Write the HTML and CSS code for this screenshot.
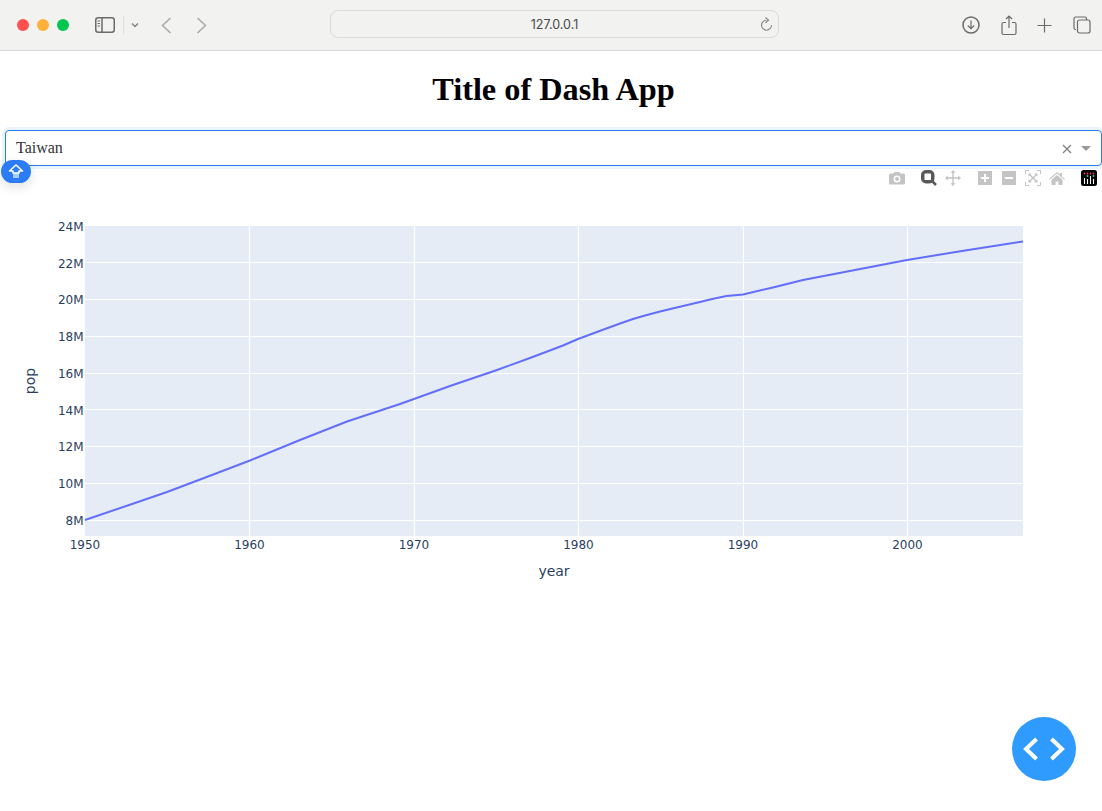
FILE: index.html
```html
<!DOCTYPE html>
<html>
<head>
  <meta charset="utf-8">
  <title>Title of Dash App</title>
  <link rel="stylesheet" href="styles.css">
</head>
<body>
  <!-- Browser toolbar -->
  <div class="toolbar">
    <div class="toolbar-left">
      <span class="light light-red"></span>
      <span class="light light-yellow"></span>
      <span class="light light-green"></span>
      <svg class="tb-sidebar" width="20" height="16" viewBox="0 0 20 16">
        <rect x="0.75" y="0.75" width="18.5" height="14.5" rx="2.5" class="tb-stroke"/>
        <path d="M7 1v14" class="tb-stroke"/>
        <path d="M2.5 4h2.5M2.5 6.5h2.5M2.5 9h2.5" class="tb-stroke-thin"/>
      </svg>
      <span class="tb-divider"></span>
      <svg class="tb-chevron" width="8" height="6" viewBox="0 0 8 6">
        <path d="M1 1.5l3 3 3-3" class="tb-stroke-soft"/>
      </svg>
      <svg class="tb-back" width="11" height="17" viewBox="0 0 11 17">
        <path d="M9.5 1L1.5 8.5l8 7.5" class="tb-stroke-nav"/>
      </svg>
      <svg class="tb-forward" width="11" height="17" viewBox="0 0 11 17">
        <path d="M1.5 1l8 7.5-8 7.5" class="tb-stroke-nav"/>
      </svg>
    </div>
    <div class="urlbar">
      <span class="url-text">127.0.0.1</span>
      <svg class="url-reload" width="13" height="15" viewBox="0 0 13 15">
        <path d="M6.5 3.2a5 5 0 1 0 5 5" class="tb-stroke-reload"/>
        <path d="M5.5 0.5l3 2.7-3 2.7" class="tb-stroke-reload"/>
      </svg>
    </div>
    <div class="toolbar-right">
      <svg width="18" height="18" viewBox="0 0 18 18">
        <circle cx="9" cy="9" r="8" class="tb-stroke"/>
        <path d="M9 4.5v8M5.8 9.5L9 12.7l3.2-3.2" class="tb-stroke-thin"/>
      </svg>
      <svg width="16" height="21" viewBox="0 0 16 21">
        <path d="M5 7.5H2.5a1.5 1.5 0 0 0-1.5 1.5v9a1.5 1.5 0 0 0 1.5 1.5h11a1.5 1.5 0 0 0 1.5-1.5V9a1.5 1.5 0 0 0-1.5-1.5H11" class="tb-stroke-thin"/>
        <path d="M8 13V1.5M5 4l3-3 3 3" class="tb-stroke-thin"/>
      </svg>
      <svg width="15" height="15" viewBox="0 0 15 15">
        <path d="M7.5 0.5v14M0.5 7.5h14" class="tb-stroke-thin"/>
      </svg>
      <svg width="18" height="18" viewBox="0 0 18 18">
        <path d="M3 13.5H2.5A1.5 1.5 0 0 1 1 12V2.5A1.5 1.5 0 0 1 2.5 1H12a1.5 1.5 0 0 1 1.5 1.5V4" class="tb-stroke-thin"/>
        <rect x="4.5" y="4" width="12.5" height="13" rx="2" class="tb-stroke-thin"/>
      </svg>
    </div>
  </div>

  <!-- Page header and country picker -->
  <h1 class="title">Title of Dash App</h1>
  <div class="dropdown">
    <span class="dropdown-value">Taiwan</span>
    <svg class="dropdown-clear" width="10" height="10" viewBox="0 0 10 10">
      <path d="M1 1l8 8M9 1l-8 8"/>
    </svg>
    <span class="dropdown-arrow"></span>
  </div>

  <!-- Graph -->
  <div class="graph">
    <div class="modebar">
      <div class="modebar-group">
        <svg class="mode-icon" viewBox="0 0 16 16">
          <path class="mode-fill" fill-rule="evenodd" d="M1.5 3.5h3l1-1.5h5l1 1.5h3a1.5 1.5 0 0 1 1.5 1.5v8a1.5 1.5 0 0 1-1.5 1.5h-13A1.5 1.5 0 0 1 0 13V5a1.5 1.5 0 0 1 1.5-1.5zM8 5.5a3.5 3.5 0 1 0 0 7 3.5 3.5 0 0 0 0-7zM8 7a2 2 0 1 1 0 4 2 2 0 0 1 0-4z"/>
        </svg>
      </div>
      <div class="modebar-group">
        <svg class="mode-icon" viewBox="0 0 16 16">
          <path class="mode-active" fill-rule="evenodd" d="M5 0h3.500A5 5 0 0 1 13.500 5v3.500a5 5 0 0 1-5 5H5a5 5 0 0 1-5-5V5a5 5 0 0 1 5-5zM4 3.500A.5.5 0 0 0 3.500 4v5.500a.5.5 0 0 0 .5.5h5.500a.5.5 0 0 0 .5-.5V4a.5.5 0 0 0-.5-.5z"/>
          <path class="mode-handle" d="M11.500 11.500L15 15"/>
        </svg>
        <svg class="mode-icon" viewBox="0 0 16 16">
          <path class="mode-fill" d="M8 0l2.500 2.800H8.700v4.500h4.500V5.500L16 8l-2.800 2.500V8.700H8.700v4.500h1.800L8 16l-2.500-2.800h1.800V8.700H2.800v1.800L0 8l2.800-2.500v1.800h4.500V2.800H5.500z"/>
        </svg>
      </div>
      <div class="modebar-group">
        <svg class="mode-icon" viewBox="0 0 16 16">
          <path class="mode-fill" fill-rule="evenodd" d="M1 1h14v14H1zM7 4v3H4v2h3v3h2V9h3V7H9V4z"/>
        </svg>
        <svg class="mode-icon" viewBox="0 0 16 16">
          <path class="mode-fill" fill-rule="evenodd" d="M1 1h14v14H1zM4 7v2h8V7z"/>
        </svg>
        <svg class="mode-icon" viewBox="0 0 16 16">
          <path class="mode-line" d="M.5 4V.5H4M12 .5h3.500V4M15.500 12v3.500H12M4 15.500H.5V12"/>
          <path class="mode-fill" d="M3.500 3.500h3.200L5.600 4.600 8 7l2.400-2.400-1.100-1.100h3.200v3.200l-1.100-1.100L9 8l2.400 2.400 1.100-1.100v3.200H9.300l1.100-1.100L8 9l-2.400 2.400 1.100 1.100H3.500V9.300l1.100 1.100L7 8 4.600 5.600 3.500 6.700z"/>
        </svg>
        <svg class="mode-icon" viewBox="0 0 16 16">
          <path class="mode-fill" d="M8 2l3 2.600V3h2v3.400L16 9l-.7.800L8 3.600.7 9.800 0 9zM2.500 9.800L8 5l5.500 4.800V15H9.500v-3.500h-3V15h-4z"/>
        </svg>
      </div>
      <div class="modebar-group">
        <svg class="mode-icon" viewBox="0 0 16 16">
          <rect width="16" height="16" rx="2.500" class="logo-bg"/>
          <circle cx="3.500" cy="3.500" r=".9" class="logo-pink"/>
          <circle cx="6.500" cy="3.500" r=".9" class="logo-pink"/>
          <circle cx="9.500" cy="3.500" r=".9" class="logo-pink"/>
          <circle cx="12.500" cy="3.500" r=".9" class="logo-pink"/>
          <circle cx="6.500" cy="6" r=".9" class="logo-teal"/>
          <circle cx="12.500" cy="6" r=".9" class="logo-teal"/>
          <path d="M3.500 8v6M6.500 9v5M9.500 6v8M12.500 9v5" class="logo-bars"/>
        </svg>
      </div>
    </div>

    <svg class="chart" width="1102" height="450" viewBox="0 166 1102 450">
      <rect class="plot-bg" x="85" y="226" width="938" height="310"/>

      <path class="grid" d="M249.500 226v310M414.500 226v310M578.500 226v310M743.500 226v310M907.500 226v310"/>
      <path class="grid" d="M85 262.500h938M85 299.500h938M85 336.500h938M85 373.500h938M85 409.500h938M85 446.500h938M85 483.500h938M85 520.500h938"/>

      <polyline class="trace" points="85,520 135,503 167,492 208,476.500 250,460.500 300,440 347,421.500 400,404 450,386 497,370 530,358 563,345.500 578,339 605,329 620,323.500 633,319 645,315.500 660,311.500 683,306 700,302 710,299.500 726.500,296 743,294.500 775,287 803,280 855,270 907,260 965,250.500 1023,241.500"/>

      <g class="tick tick-y">
        <text x="83.500" y="230.500">24M</text>
        <text x="83.500" y="268">22M</text>
        <text x="83.500" y="304">20M</text>
        <text x="83.500" y="341">18M</text>
        <text x="83.500" y="378">16M</text>
        <text x="83.500" y="414.500">14M</text>
        <text x="83.500" y="451">12M</text>
        <text x="83.500" y="488">10M</text>
        <text x="83.500" y="525">8M</text>
      </g>
      <g class="tick tick-x">
        <text x="85" y="549">1950</text>
        <text x="249.500" y="549">1960</text>
        <text x="414" y="549">1970</text>
        <text x="578.500" y="549">1980</text>
        <text x="743" y="549">1990</text>
        <text x="907.500" y="549">2000</text>
      </g>
      <text class="axis-title" x="554" y="576">year</text>
      <text class="axis-title" transform="translate(35 381) rotate(-90)">pop</text>
    </svg>
  </div>

  <!-- Dash dev tools -->
  <div class="version-pill">
    <svg width="16" height="15" viewBox="0 0 16 15">
      <path class="pill-base" d="M5 9h6v5H5z"/>
      <path class="pill-arrow" d="M8 1L14.500 7H11V9H5V7H1.500z"/>
    </svg>
  </div>
  <div class="debug-button">
    <svg width="42" height="24" viewBox="0 0 42 24">
      <path class="debug-chevron" d="M13.500 2L3 12l10.500 10M28.500 2L39 12 28.500 22"/>
    </svg>
  </div>
</body>
</html>
```

FILE: styles.css
```css
body {
  margin: 0;
  background: #fff;
  overflow: hidden;
  height: 811px;
  position: relative;
}

/* Browser toolbar */
.toolbar {
  display: flex;
  align-items: center;
  height: 50px;
  background: #f2f2f1;
  border-bottom: 1px solid #d9d9d9;
}
.toolbar-left {
  display: flex;
  align-items: center;
  width: 330px;
  padding-left: 17px;
  box-sizing: border-box;
}
.light {
  width: 12px;
  height: 12px;
  border-radius: 50%;
  margin-right: 8px;
}
.light-red { background: #ff4f4f; }
.light-yellow { background: #ffb03a; }
.light-green { background: #00c64f; }
.tb-sidebar { margin-left: 18px; }
.tb-divider {
  width: 1px;
  height: 18px;
  background: #dcdcdc;
  margin-left: 8px;
}
.tb-chevron { margin-left: 7px; }
.tb-back { margin-left: 22px; }
.tb-forward { margin-left: 24px; }
.tb-stroke, .tb-stroke-thin, .tb-stroke-soft, .tb-stroke-nav, .tb-stroke-reload {
  fill: none;
  stroke: #6b6b6b;
}
.tb-stroke { stroke-width: 1.5; }
.tb-stroke-thin { stroke-width: 1.2; }
.tb-stroke-soft { stroke-width: 1.4; stroke: #808080; }
.tb-stroke-nav { stroke-width: 1.5; stroke: #a8a8a8; }
.tb-stroke-reload { stroke-width: 1.1; stroke: #808080; }

.urlbar {
  position: relative;
  width: 449px;
  height: 28px;
  margin-bottom: 2px;
  box-sizing: border-box;
  border: 1px solid #dadada;
  border-radius: 8px;
  display: flex;
  align-items: center;
  justify-content: center;
}
.url-text {
  font-family: Inter, "Liberation Sans", sans-serif;
  font-size: 12.500px;
  color: #4a4a4a;
}
.url-reload {
  position: absolute;
  right: 5px;
  top: 6px;
}
.toolbar-right {
  display: flex;
  align-items: center;
  justify-content: space-between;
  width: 129px;
  margin-left: 183px;
}

/* Heading and dropdown */
.title {
  margin: 20px 0 22px 5px;
  font-family: "Liberation Serif", serif;
  font-size: 32.300px;
  line-height: 37px;
  font-weight: bold;
  text-align: center;
  color: #000;
}
.dropdown {
  display: flex;
  align-items: center;
  box-sizing: border-box;
  height: 36px;
  margin-left: 5px;
  padding: 0 10px 0 10px;
  border: 1px solid #2b7de9;
  border-radius: 4px;
  box-shadow: 0 0 0 3px #ebf3fc;
  background: #fff;
  position: relative;
  font-family: "Liberation Serif", serif;
  font-size: 16px;
  color: #333;
}
.dropdown-value { flex: 1; }
.dropdown-clear {
  margin: 2px 9px 0 0;
}
.dropdown-clear path {
  fill: none;
  stroke: #808080;
  stroke-width: 1.300;
}
.dropdown-arrow {
  width: 0;
  height: 0;
  border-style: solid;
  border-width: 5px 5px 0;
  border-color: #999 transparent transparent;
}

/* Graph */
.graph {
  position: relative;
  height: 450px;
}
.chart { display: block; }
.modebar {
  position: absolute;
  top: 4px;
  right: 5px;
  display: flex;
  gap: 16px;
}
.modebar-group {
  display: flex;
  gap: 8px;
}
.mode-icon {
  width: 16px;
  height: 16px;
  display: block;
}
.mode-fill { fill: #c4c4c4; }
.mode-active { fill: #595959; }
.mode-handle {
  fill: none;
  stroke: #595959;
  stroke-width: 2.500;
}
.mode-line {
  fill: none;
  stroke: #c4c4c4;
  stroke-width: 1;
}
.logo-bg { fill: #000; }
.logo-pink { fill: #ef3b6e; }
.logo-teal { fill: #2fd0c8; }
.logo-bars {
  stroke: #fff;
  stroke-width: 1.100;
  fill: none;
}
.plot-bg { fill: #e5ecf6; }
.grid {
  fill: none;
  stroke: #fff;
  stroke-width: 1.200;
}
.trace {
  fill: none;
  stroke: #636efa;
  stroke-width: 2;
  stroke-linejoin: round;
}
.tick, .axis-title {
  font-family: "DejaVu Sans", Verdana, sans-serif;
  fill: #2a3f5f;
}
.tick { font-size: 12px; }
.tick-y text { text-anchor: end; }
.tick-x text { text-anchor: middle; }
.axis-title {
  font-size: 14px;
  text-anchor: middle;
}

/* Dash dev tools */
.version-pill {
  position: absolute;
  left: 1px;
  top: 160px;
  width: 30px;
  height: 23px;
  border-radius: 12px;
  background: #2b7cf6;
  box-shadow: 0 4px 12px rgba(0, 0, 0, 0.12);
  display: flex;
  align-items: center;
  justify-content: center;
}
.pill-arrow {
  fill: none;
  stroke: #fff;
  stroke-width: 1.500;
  stroke-linejoin: round;
}
.pill-base { fill: #a9cbff; }
.debug-button {
  position: absolute;
  right: 26px;
  bottom: 30px;
  width: 64px;
  height: 64px;
  border-radius: 50%;
  background: #2f9bff;
  display: flex;
  align-items: center;
  justify-content: center;
}
.debug-chevron {
  fill: none;
  stroke: #fff;
  stroke-width: 4;
}
```
